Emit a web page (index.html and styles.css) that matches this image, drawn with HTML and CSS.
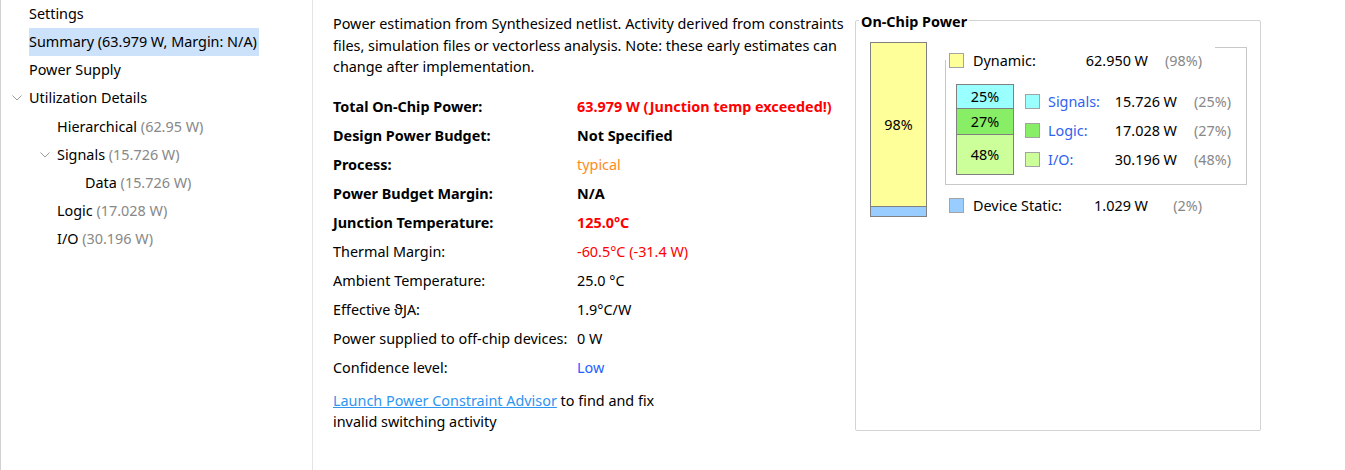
FILE: index.html
```html
<!DOCTYPE html>
<html>
<head>
<meta charset="utf-8">
<link rel="stylesheet" href="styles.css">
</head>
<body>
<div class="app">
  <nav class="tree">
    <div class="row l0"><span class="tog"></span><span class="lbl">Settings</span></div>
    <div class="row l0"><span class="tog"></span><span class="lbl sel">Summary (63.979 W, Margin: N/A)</span></div>
    <div class="row l0"><span class="tog"></span><span class="lbl">Power Supply</span></div>
    <div class="row l0"><span class="tog"><svg width="10" height="6" viewBox="0 0 10 6"><polyline points="0.5,0.5 5,5 9.5,0.5" fill="none" stroke="#9a9a9a" stroke-width="1"/></svg></span><span class="lbl">Utilization Details</span></div>
    <div class="row l1"><span class="tog"></span><span class="lbl">Hierarchical <span class="dim">(62.95 W)</span></span></div>
    <div class="row l1"><span class="tog"><svg width="10" height="6" viewBox="0 0 10 6"><polyline points="0.5,0.5 5,5 9.5,0.5" fill="none" stroke="#9a9a9a" stroke-width="1"/></svg></span><span class="lbl">Signals <span class="dim">(15.726 W)</span></span></div>
    <div class="row l2"><span class="tog"></span><span class="lbl">Data <span class="dim">(15.726 W)</span></span></div>
    <div class="row l1"><span class="tog"></span><span class="lbl">Logic <span class="dim">(17.028 W)</span></span></div>
    <div class="row l1"><span class="tog"></span><span class="lbl">I/O <span class="dim">(30.196 W)</span></span></div>
  </nav>

  <main class="main">
    <section class="details">
      <p class="intro">Power estimation from Synthesized netlist. Activity derived from constraints files, simulation files or vectorless analysis. Note: these early estimates can change after implementation.</p>
      <div class="props">
        <div class="b">Total On-Chip Power:</div><div class="b red">63.979 W (Junction temp exceeded!)</div>
        <div class="b">Design Power Budget:</div><div class="b">Not Specified</div>
        <div class="b">Process:</div><div class="orange">typical</div>
        <div class="b">Power Budget Margin:</div><div class="b">N/A</div>
        <div class="b">Junction Temperature:</div><div class="b red">125.0°C</div>
        <div>Thermal Margin:</div><div class="red">-60.5°C (-31.4 W)</div>
        <div>Ambient Temperature:</div><div>25.0 °C</div>
        <div>Effective ϑJA:</div><div>1.9°C/W</div>
        <div>Power supplied to off-chip devices:</div><div>0 W</div>
        <div>Confidence level:</div><div class="blue">Low</div>
      </div>
      <p class="advice"><a href="#">Launch Power Constraint Advisor</a> to find and fix<br>invalid switching activity</p>
    </section>

    <fieldset class="chip">
      <legend>On-Chip Power</legend>
      <div class="chip-body">
        <div class="bar">
          <div class="bar-dyn">98%</div>
          <div class="bar-static"></div>
        </div>
        <div class="legend-area">
          <div class="dyn-group">
            <div class="lg-row dyn">
              <span class="sw sw-dyn"></span><span>Dynamic:</span><span class="val">62.950 W</span><span class="pct">(98%)</span>
            </div>
            <div class="dyn-body">
              <div class="subbar">
                <div class="seg s-sig">25%</div>
                <div class="seg s-log">27%</div>
                <div class="seg s-io">48%</div>
              </div>
              <div class="sub-legend">
                <div class="sub-row"><span class="sw sw-sig"></span><span class="link">Signals:</span><span class="val">15.726 W</span><span class="pct">(25%)</span></div>
                <div class="sub-row"><span class="sw sw-log"></span><span class="link">Logic:</span><span class="val">17.028 W</span><span class="pct">(27%)</span></div>
                <div class="sub-row"><span class="sw sw-io"></span><span class="link">I/O:</span><span class="val">30.196 W</span><span class="pct">(48%)</span></div>
              </div>
            </div>
          </div>
          <div class="lg-row static">
            <span class="sw sw-static"></span><span>Device Static:</span><span class="val">1.029 W</span><span class="pct">(2%)</span>
          </div>
        </div>
      </div>
    </fieldset>
  </main>
</div>
</body>
</html>
```
FILE: styles.css
```css
* { box-sizing: border-box; }
html, body { margin: 0; padding: 0; background: #fff; }
body {
  font-family: "Noto Sans", "Open Sans", sans-serif;
  font-size: 14.4px;
  color: #000;
}
.app { display: flex; height: 470px; }

/* tree */
.tree {
  width: 313px;
  flex: none;
  border-left: 1px solid #d2d2d2;
  border-right: 1px solid #e3e3e3;
}
.row { display: flex; align-items: center; height: 28.15px; white-space: nowrap; }
.l0 { padding-left: 7px; }
.l1 { padding-left: 35px; }
.l2 { padding-left: 63px; }
.tog { width: 21px; flex: none; display: flex; align-items: center; }
.tog svg { margin-left: 4px; display: block; }
.lbl { line-height: 28px; }
.sel { background: #cce1fa; padding-right: 2px; }
.dim { color: #888; }

/* main */
.main { flex: 1; display: flex; align-items: flex-start; }
.details { width: 542px; flex: none; padding: 13px 0 0 20px; }
.intro { margin: 0; line-height: 21.5px; width: 515px; }
.props {
  display: grid;
  grid-template-columns: 244px auto;
  grid-auto-rows: 29px;
  align-items: center;
  margin-top: 14px;
}
.b { font-weight: 700; }
.red { color: #ff0000; }
.orange { color: #ff8a1c; }
.blue { color: #1f62ff; }
.advice { margin: 8px 0 0; line-height: 21px; }
.advice a { color: #2e95f0; text-decoration: underline; }

/* on-chip power */
.chip {
  width: 406px;
  height: 423px;
  margin: 8px 0 0 0;
  padding: 10px 0 0 0;
  border: 1px solid #d3d3d3;
  border-radius: 2px;
  min-width: 0;
}
.chip legend {
  font-weight: 700;
  padding: 4px 2px 0;
  margin-left: 3px;
  line-height: 20px;
}
.chip-body { display: flex; align-items: flex-start; }
.bar {
  margin-left: 14px;
  width: 57px;
  border: 1px solid #808080;
  flex: none;
}
.bar-dyn {
  height: 163px;
  background: #ffff99;
  display: flex;
  align-items: center;
  justify-content: center;
}
.bar-static { height: 10px; background: #99ccff; border-top: 1px solid #808080; }

.legend-area { margin-left: 18px; width: 302px; flex: none; }
.dyn-group {
  position: relative;
  margin-top: 18px;
  border-right: 1px solid #c8c8c8;
  border-bottom: 1px solid #c8c8c8;
  padding: 0 0 9px 11px;
}
.dyn-group::before {
  content: "";
  position: absolute;
  top: 0; right: -1px;
  width: 32px; height: 1px;
  background: #c8c8c8;
}
.dyn-group::after {
  content: "";
  position: absolute;
  left: 0; top: 13px; bottom: -1px;
  width: 1px;
  background: #c8c8c8;
}
.lg-row {
  display: grid;
  grid-template-columns: 24px 100px 75px 54px;
  align-items: center;
  height: 26px;
}
.dyn { margin: -13px 0 0 -7px; }
.static { margin: 7px 0 0 4px; }
.val { text-align: right; }
.pct { text-align: right; color: #888; }
.sw { width: 15px; height: 15px; border: 1px solid #a3a3a3; display: block; }
.sw-dyn { background: #ffff99; }
.sw-static { background: #99ccff; }
.sw-sig { background: #99ffff; }
.sw-log { background: #88ee66; }
.sw-io { background: #ccff99; }

.dyn-body { display: flex; align-items: flex-start; margin-top: 11px; }
.subbar { width: 58px; border: 1px solid #808080; flex: none; }
.seg { display: flex; align-items: center; justify-content: center; }
.s-sig { height: 23px; background: #99ffff; }
.s-log { height: 26px; background: #88ee66; border-top: 1px solid #808080; }
.s-io { height: 40px; background: #ccff99; border-top: 1px solid #808080; }
.sub-legend { margin: 3px 0 0 11px; }
.sub-row {
  display: grid;
  grid-template-columns: 23px 60px 69px 54px;
  align-items: center;
  height: 29px;
}
.link { color: #2f62f0; }
```
